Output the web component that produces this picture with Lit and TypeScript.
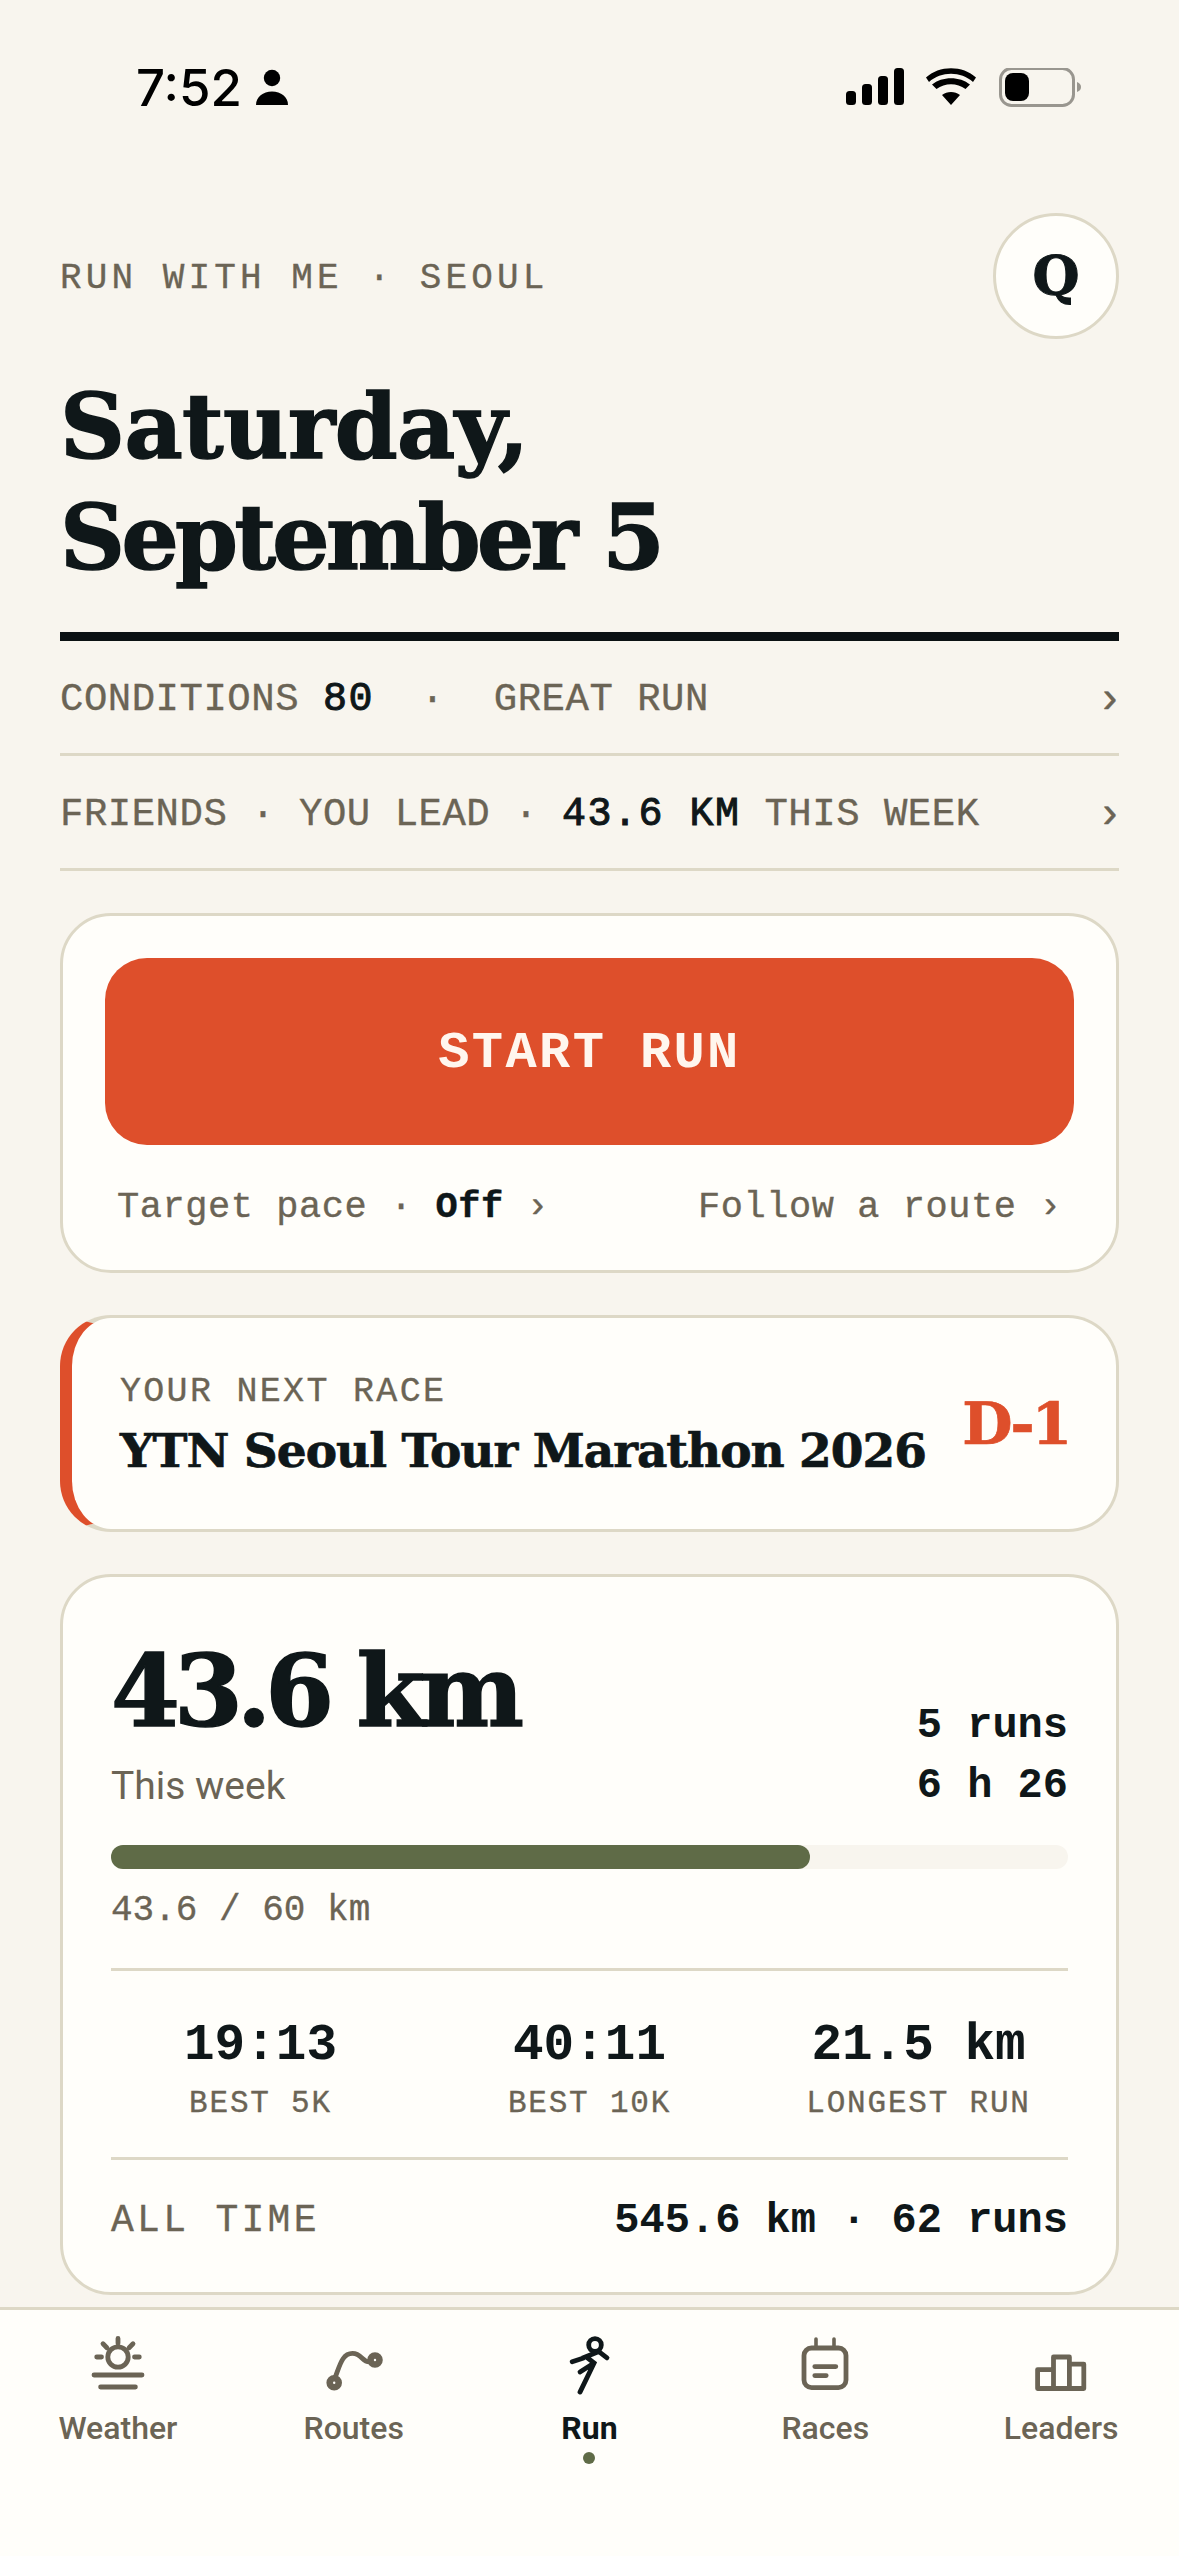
import { LitElement, html, css } from 'lit';
import { customElement, property } from 'lit/decorators.js';

const tabIcons = {
  weather: html`<svg viewBox="0 0 24 24"><circle cx="12" cy="9" r="3.4"/><path d="M12 2.8V4.4M7 4.6 8.3 5.9M17 4.6 15.7 5.9M4.9 9H6.5M17.5 9H19.1M4 15H20M6.2 19H17.8"/></svg>`,
  routes: html`<svg viewBox="0 0 24 24"><circle cx="5.4" cy="17.600" r="1.5" style="stroke-width:2.2"/><circle cx="19" cy="10" r="1.5" style="stroke-width:2.2"/><path d="M5.8 15.6C7.4 11.4 8.2 7.8 11.5 7.8C14.6 7.8 14.6 10.6 17.1 10.6"/></svg>`,
  run: html`<svg viewBox="0 0 24 24"><circle cx="14" cy="5" r="2.1"/><path d="M6.4 10.6 10.2 9.3M15.3 7.2 18 9.3M15.3 7.2 11 8.9 13.7 11 9 20.7M13.7 11 9 14"/></svg>`,
  races: html`<svg viewBox="0 0 24 24"><rect x="5" y="6" width="14" height="13.2" rx="2.5"/><path d="M9 3V6M15 3V6" style="stroke-width:1.2"/><path d="M8.6 12.2H15.6M8.6 15.2H12.4"/></svg>`,
  leaders: html`<svg viewBox="0 0 24 24"><path stroke-linejoin="round" d="M4.2 19.5V13.2H9.5V9H14.8V11.4H19.6V19.5ZM9.5 13.2V19.5M14.8 11.4V19.5"/></svg>`,
};

const tabs = [
  { key: 'weather', label: 'Weather' },
  { key: 'routes', label: 'Routes' },
  { key: 'run', label: 'Run', active: true },
  { key: 'races', label: 'Races' },
  { key: 'leaders', label: 'Leaders' },
] as const;

const bests = [
  { value: '19:13', label: 'BEST 5K' },
  { value: '40:11', label: 'BEST 10K' },
  { value: '21.5 km', label: 'LONGEST RUN' },
];

@customElement('app-root')
class AppRoot extends LitElement {
  static styles = css`
    :host {
      display: block;
      --bg: #f8f5ee;
      --card: #fffefa;
      --line: #ddd8c6;
      --ink: #0f1719;
      --muted: #6b6455;
      --red: #de4f2b;
      --green: #5f6b47;
      --serif: 'DejaVu Serif', 'Liberation Serif', serif;
      --mono: 'Liberation Mono', 'DejaVu Sans Mono', monospace;
      --sans: Roboto, 'Noto Sans', sans-serif;
    }
    .page {
      height: 2556px;
      display: flex;
      flex-direction: column;
      background: var(--bg);
      overflow: hidden;
      color: var(--ink);
    }
    .status {
      height: 150px;
      flex: none;
      box-sizing: border-box;
      padding: 68px 98px 0 136px;
      display: flex;
      justify-content: space-between;
      align-items: flex-start;
    }
    .clock {
      display: flex;
      align-items: center;
      gap: 13px;
      height: 39px;
      font: 500 51px/39px Inter, sans-serif;
      color: #000;
    }
    .clock svg { width: 34px; height: 39px; display: block; }
    .status-icons { width: 236px; height: 40px; display: block; }
    main {
      flex: 1;
      min-height: 0;
      padding: 0 60px;
    }
    .top {
      height: 126px;
      margin-top: 63px;
      display: flex;
      align-items: center;
      justify-content: space-between;
    }
    .eyebrow {
      margin-top: 6px;
      font: 400 36px/40px var(--mono);
      letter-spacing: 4.1px;
      color: var(--muted);
      -webkit-text-stroke: 0.35px currentColor;
    }
    .avatar {
      width: 126px;
      height: 126px;
      box-sizing: border-box;
      border: 3px solid var(--line);
      border-radius: 50%;
      background: var(--card);
      display: flex;
      align-items: center;
      justify-content: center;
      font: 700 54px/1 var(--serif);
      -webkit-text-stroke: 1px currentColor;
    }
    h1 {
      margin: 32px 0 0;
      font: 700 90px/111px var(--serif);
      -webkit-text-stroke: 1.5px currentColor;
    }
    h1 span { display: block; }
    .line-day { letter-spacing: -0.6px; }
    .line-date { letter-spacing: -3.6px; }
    .rule {
      height: 9px;
      margin-top: 39px;
      background: #0b1113;
    }
    .row {
      height: 115px;
      box-sizing: border-box;
      padding-top: 6px;
      border-bottom: 3px solid var(--line);
      display: flex;
      align-items: center;
      justify-content: space-between;
      font: 400 39px/40px var(--mono);
      letter-spacing: 0.5px;
      color: var(--muted);
      -webkit-text-stroke: 0.35px currentColor;
    }
    .row b {
      font-weight: 400;
      font-size: 40px;
      letter-spacing: 1.5px;
      color: var(--ink);
      -webkit-text-stroke: 1px currentColor;
    }
    .row .sep { margin: 0 49px 0 23px; }
    .row .chev { margin-right: -4px; font-size: 44px; letter-spacing: 0; }
    .card {
      margin-top: 42px;
      box-sizing: border-box;
      background: var(--card);
      border: 3px solid var(--line);
      border-radius: 51px;
    }
    .start-card {
      height: 360px;
      padding: 42px;
    }
    .start {
      height: 187px;
      box-sizing: border-box;
      padding-top: 5px;
      border-radius: 42px;
      background: var(--red);
      color: #fff6ee;
      display: flex;
      align-items: center;
      justify-content: center;
      font: 700 52px/1 var(--mono);
      letter-spacing: 2.4px;
    }
    .start-links {
      margin-top: 40px;
      padding: 0 12px;
      display: flex;
      justify-content: space-between;
      font: 400 37px/44px var(--mono);
      letter-spacing: 0.55px;
      color: var(--muted);
      -webkit-text-stroke: 0.35px currentColor;
    }
    .start-links b { color: var(--ink); }
    .race {
      height: 217px;
      border-left: 12px solid var(--red);
      padding: 0 47px 0 48px;
      display: flex;
      align-items: center;
      justify-content: space-between;
    }
    .race-text { margin-top: 6px; }
    .race-label {
      font: 400 35px/40px var(--mono);
      letter-spacing: 2.3px;
      color: var(--muted);
      -webkit-text-stroke: 0.35px currentColor;
    }
    .race-name {
      margin-top: 9px;
      font: 700 47px/60px var(--serif);
      letter-spacing: -1px;
      white-space: nowrap;
      -webkit-text-stroke: 0.7px currentColor;
    }
    .d-day {
      font: 700 58px/1 var(--serif);
      letter-spacing: -3px;
      color: var(--red);
      -webkit-text-stroke: 0.7px currentColor;
    }
    .week {
      height: 721px;
      padding: 48px 48px 0;
    }
    .week-head {
      height: 201px;
      display: flex;
      justify-content: space-between;
    }
    .km {
      margin-top: 8px;
      font: 700 99px/116px var(--serif);
      letter-spacing: -6px;
      -webkit-text-stroke: 1.5px currentColor;
    }
    .week-sub {
      margin-top: 12px;
      font: 400 39px/50px var(--sans);
      color: var(--muted);
    }
    .week-side {
      margin-top: 71px;
      text-align: right;
      font: 700 42px/60px var(--mono);
    }
    .bar {
      margin-top: 19px;
      height: 24px;
      border-radius: 12px;
      background: var(--bg);
    }
    .bar div {
      height: 100%;
      border-radius: 12px;
      background: var(--green);
    }
    .bar-label {
      margin-top: 20px;
      font: 400 36px/44px var(--mono);
      color: var(--muted);
      -webkit-text-stroke: 0.35px currentColor;
    }
    .bests {
      margin-top: 35px;
      padding-top: 45px;
      height: 192px;
      box-sizing: border-box;
      border-top: 3px solid var(--line);
      border-bottom: 3px solid var(--line);
      display: grid;
      grid-template-columns: repeat(3, 1fr);
      gap: 30px;
      text-align: center;
    }
    .best-value { font: 700 51px/60px var(--mono); }
    .best-label {
      margin-top: 11px;
      font: 400 31px/34px var(--mono);
      letter-spacing: 1.8px;
      color: var(--muted);
      white-space: nowrap;
      -webkit-text-stroke: 0.35px currentColor;
    }
    .all-time {
      height: 116px;
      padding-top: 6px;
      box-sizing: border-box;
      display: flex;
      align-items: center;
      justify-content: space-between;
    }
    .all-label {
      font: 400 38px/44px var(--mono);
      letter-spacing: 3.3px;
      color: var(--muted);
      -webkit-text-stroke: 0.35px currentColor;
    }
    .all-value { font: 700 42px/44px var(--mono); }
    nav {
      flex: none;
      height: 249px;
      box-sizing: border-box;
      border-top: 3px solid var(--line);
      background: var(--card);
      display: grid;
      grid-template-columns: repeat(5, 1fr);
      padding-top: 20px;
    }
    .tab {
      display: flex;
      flex-direction: column;
      align-items: center;
      font: 500 32px/40px var(--sans);
      color: var(--muted);
    }
    .tab svg {
      width: 72px;
      height: 72px;
      display: block;
      margin-bottom: 6px;
      fill: none;
      stroke: currentColor;
      stroke-width: 1.6;
      stroke-linecap: round;
    }
    .tab.active { color: var(--ink); font-weight: 700; }
    .dot {
      width: 12px;
      height: 12px;
      margin-top: 4px;
      border-radius: 50%;
      background: var(--green);
    }
  `;

  @property({ type: Number }) weekKm = 43.6;
  @property({ type: Number }) goalKm = 60;

  render() {
    const pct = Math.round((this.weekKm / this.goalKm) * 100);
    return html`
      <div class="page">
        <div class="status">
          <div class="clock">
            <span>7:52</span>
            <svg viewBox="0 0 34 39" fill="#000">
              <circle cx="17" cy="10" r="8.2"/>
              <path d="M1 37C1 29 8 23.500 17 23.500S33 29 33 37Z"/>
            </svg>
          </div>
          <svg class="status-icons" viewBox="0 0 236 40">
            <rect x="1" y="23" width="10" height="14" rx="3.500"/>
            <rect x="17" y="16" width="10" height="21" rx="3.500"/>
            <rect x="33" y="8" width="10" height="29" rx="3.500"/>
            <rect x="49" y="0" width="10" height="37" rx="3.500"/>
            <path d="M106 37 97 27C102 23 110 23 115 27ZM91.500 21 87 16.500C97 8 115 8 125 16.500L120.500 21C112 14.500 100 14.500 91.500 21ZM84 14 81 9.500C94 -3 118 -3 131 9.500L128 14C116 3 96 3 84 14Z"/>
            <rect x="155.500" y="0.500" width="73" height="37" rx="11" fill="none" stroke="#99968f" stroke-width="3"/>
            <rect x="160" y="5" width="24" height="28" rx="8"/>
            <path d="M232 14C235 15 236 17 236 19S235 23 232 24Z" fill="#99968f"/>
          </svg>
        </div>

        <main>
          <div class="top">
            <span class="eyebrow">RUN WITH ME · SEOUL</span>
            <div class="avatar">Q</div>
          </div>
          <h1><span class="line-day">Saturday,</span><span class="line-date">September 5</span></h1>
          <div class="rule"></div>
          <div class="row">
            <span>CONDITIONS <b>80</b><span class="sep"> ·</span>GREAT RUN</span>
            <span class="chev">›</span>
          </div>
          <div class="row">
            <span>FRIENDS · YOU LEAD · <b>43.6 KM</b> THIS WEEK</span>
            <span class="chev">›</span>
          </div>

          <section class="card start-card">
            <div class="start">START RUN</div>
            <div class="start-links">
              <span>Target pace · <b>Off</b> ›</span>
              <span>Follow a route ›</span>
            </div>
          </section>

          <section class="card race">
            <div class="race-text">
              <div class="race-label">YOUR NEXT RACE</div>
              <div class="race-name">YTN Seoul Tour Marathon 2026</div>
            </div>
            <div class="d-day">D-1</div>
          </section>

          <section class="card week">
            <div class="week-head">
              <div>
                <div class="km">${this.weekKm} km</div>
                <div class="week-sub">This week</div>
              </div>
              <div class="week-side">5 runs<br />6 h 26</div>
            </div>
            <div class="bar"><div style="width:${pct}%"></div></div>
            <div class="bar-label">${this.weekKm} / ${this.goalKm} km</div>
            <div class="bests">
              ${bests.map(
                b => html`<div>
                  <div class="best-value">${b.value}</div>
                  <div class="best-label">${b.label}</div>
                </div>`
              )}
            </div>
            <div class="all-time">
              <span class="all-label">ALL TIME</span>
              <span class="all-value">545.6 km · 62 runs</span>
            </div>
          </section>
        </main>

        <nav>
          ${tabs.map(
            t => html`<div class="tab ${'active' in t ? 'active' : ''}">
              ${tabIcons[t.key]}
              <span>${t.label}</span>
              ${'active' in t ? html`<div class="dot"></div>` : ''}
            </div>`
          )}
        </nav>
      </div>
    `;
  }
}
